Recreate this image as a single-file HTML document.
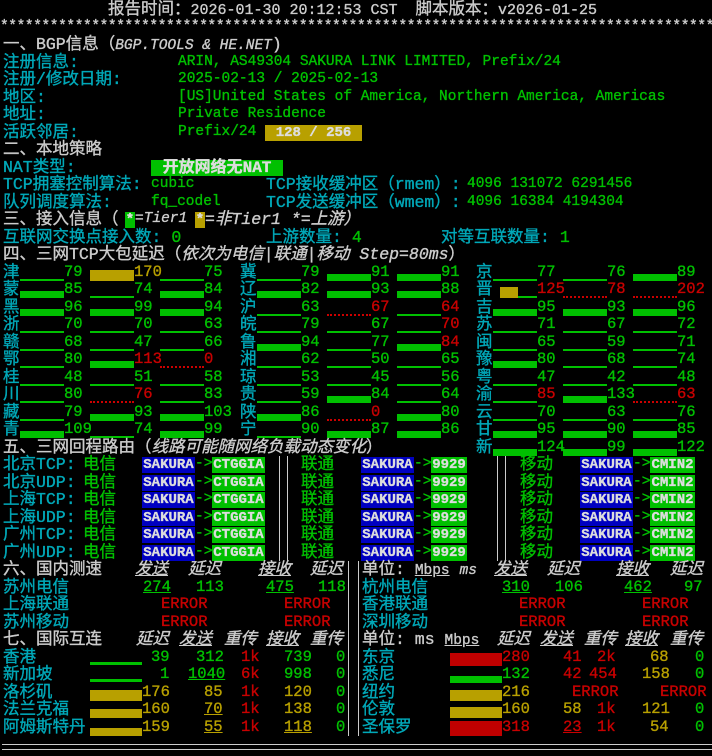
<!DOCTYPE html>
<html><head><meta charset="utf-8"><style>
body{margin:0;background:#000;width:712px;height:756px;position:relative;overflow:hidden;font-family:"Liberation Mono","Noto Sans CJK SC",monospace;font-size:14.5px;color:#ccc;-webkit-text-stroke:0.35px currentColor}
.r{position:absolute;left:0;width:712px;height:17.5px;line-height:17.5px}
.r>*{position:absolute;white-space:pre;top:0}
.z{font-size:16.5px}
.w{color:#cccccc}.c{color:#00a8b8}.g{color:#00c000}.rd{color:#c80000}.y{color:#b8a000}
.it{font-style:italic}
.n{font-size:15.5px}
i{position:absolute;display:block;height:2px;top:15px!important;width:44px;background:#00c000;-webkit-text-stroke:0}
i.f{top:10px!important;height:7px}
i.t{top:6px!important;height:11px}
i.d{background:none;border-bottom:2px dotted #c00;height:0}
i.Y{background:#b8a000}i.R{background:#c00000}
.bb,.bg,.bo{font-weight:bold;color:#ddd;top:1px!important;height:16px;line-height:16px;text-align:center;font-size:14px}
.bb{background:#0000c0}.bg{background:#00c000}.bo{background:#b8a000}
.u{text-decoration:underline}
.vl{position:absolute;width:1px;background:#ccc}
</style></head><body>
<div class="r" style="top:1px"><span class="w" style="left:108px;font-size:15px"><span class="z">报告时间：</span>2026-01-30 20:12:53 CST  <span class="z">脚本版本：</span>v2026-01-25</span></div>
<div class="r" style="top:18.5px"><span class="w" style="left:0;letter-spacing:-0.4px">**************************************************************************************</span></div>
<div class="r" style="top:36px"><span class="w z" style="left:3px">一、BGP信息（<span class="it" style="font-size:14.5px">BGP.TOOLS &amp; HE.NET</span>)</span></div>
<div class="r" style="top:53.5px"><span class="c z" style="left:3px">注册信息:</span><span class="g" style="left:178px">ARIN, AS49304 SAKURA LINK LIMITED, Prefix/24</span></div>
<div class="r" style="top:71px"><span class="c z" style="left:3px">注册/修改日期:</span><span class="g" style="left:178px">2025-02-13 / 2025-02-13</span></div>
<div class="r" style="top:88.5px"><span class="c z" style="left:3px">地区:</span><span class="g" style="left:178px">[US]United States of America, Northern America, Americas</span></div>
<div class="r" style="top:106px"><span class="c z" style="left:3px">地址:</span><span class="g" style="left:178px">Private Residence</span></div>
<div class="r" style="top:123.5px"><span class="c z" style="left:3px">活跃邻居:</span><span class="g" style="left:178px">Prefix/24</span><span class="bo" style="left:265px;width:97px">128 / 256</span></div>
<div class="r" style="top:141px"><span class="w z" style="left:3px">二、本地策略</span></div>
<div class="r" style="top:158.5px"><span class="c z" style="left:3px">NAT类型:</span><span class="bg z" style="left:151px;width:132px;font-size:16px">开放网络无NAT</span></div>
<div class="r" style="top:176px"><span class="c z" style="left:3px">TCP拥塞控制算法:</span><span class="g" style="left:151px">cubic</span><span class="c z" style="left:266px">TCP接收缓冲区（rmem）:</span><span class="g" style="left:467px">4096 131072 6291456</span></div>
<div class="r" style="top:193.5px"><span class="c z" style="left:3px">队列调度算法:</span><span class="g" style="left:151px">fq_codel</span><span class="c z" style="left:266px">TCP发送缓冲区（wmem）:</span><span class="g" style="left:467px">4096 16384 4194304</span></div>
<div class="r" style="top:211px"><span class="w z" style="left:3px">三、接入信息（</span><span class="bg" style="left:125px;width:10px">*</span><span class="w it" style="left:135px">=Tier1</span><span class="bo" style="left:195px;width:10px">*</span><span class="w it z" style="left:205px">=非Tier1 *=上游）</span></div>
<div class="r" style="top:228.5px"><span class="c z" style="left:3px">互联网交换点接入数: <span class="g">0</span></span><span class="c z" style="left:266px">上游数量: <span class="g">4</span></span><span class="c z" style="left:441px">对等互联数量: <span class="g">1</span></span></div>
<div class="r" style="top:246px"><span class="w z" style="left:3px">四、三网TCP大包延迟（<span class="it">依次为电信|联通|移动 Step=80ms</span>）</span></div>

<div class="r n" style="top:263.5px"><span class="c z" style="left:3px">津</span><i style="left:20px"></i><span class="g" style="left:64px">79</span><i class="t Y" style="left:90px"></i><span class="y" style="left:134px">170</span><i style="left:160px"></i><span class="g" style="left:204px">75</span>
<span class="c z" style="left:240px">冀</span><i style="left:257px"></i><span class="g" style="left:301px">79</span><i class="f" style="left:327px"></i><span class="g" style="left:371px">91</span><i class="f" style="left:397px"></i><span class="g" style="left:441px">91</span>
<span class="c z" style="left:476px">京</span><i style="left:493px"></i><span class="g" style="left:537px">77</span><i style="left:563px"></i><span class="g" style="left:607px">76</span><i class="f" style="left:633px"></i><span class="g" style="left:677px">89</span></div>

<div class="r n" style="top:281px"><span class="c z" style="left:3px">蒙</span><i class="f" style="left:20px"></i><span class="g" style="left:64px">85</span><i style="left:90px"></i><span class="g" style="left:134px">74</span><i class="f" style="left:160px"></i><span class="g" style="left:204px">84</span>
<span class="c z" style="left:240px">辽</span><i class="f" style="left:257px"></i><span class="g" style="left:301px">82</span><i class="f" style="left:327px"></i><span class="g" style="left:371px">93</span><i class="f" style="left:397px"></i><span class="g" style="left:441px">88</span>
<span class="c z" style="left:476px">晋</span><i class="t Y" style="left:500px;width:18px"></i><i style="left:518px;width:19px"></i><span class="rd" style="left:537px">125</span><i class="d" style="left:563px"></i><span class="rd" style="left:607px">78</span><i class="d" style="left:633px"></i><span class="rd" style="left:677px">202</span></div>

<div class="r n" style="top:298.5px"><span class="c z" style="left:3px">黑</span><i class="f" style="left:20px"></i><span class="g" style="left:64px">96</span><i class="f" style="left:90px"></i><span class="g" style="left:134px">99</span><i class="f" style="left:160px"></i><span class="g" style="left:204px">94</span>
<span class="c z" style="left:240px">沪</span><i style="left:257px"></i><span class="g" style="left:301px">63</span><i class="d" style="left:327px"></i><span class="rd" style="left:371px">67</span><i style="left:397px"></i><span class="rd" style="left:441px">64</span>
<span class="c z" style="left:476px">吉</span><i class="f" style="left:493px"></i><span class="g" style="left:537px">95</span><i class="f" style="left:563px"></i><span class="g" style="left:607px">93</span><i class="f" style="left:633px"></i><span class="g" style="left:677px">96</span></div>

<div class="r n" style="top:316px"><span class="c z" style="left:3px">浙</span><i style="left:20px"></i><span class="g" style="left:64px">70</span><i style="left:90px"></i><span class="g" style="left:134px">70</span><i style="left:160px"></i><span class="g" style="left:204px">63</span>
<span class="c z" style="left:240px">皖</span><i style="left:257px"></i><span class="g" style="left:301px">79</span><i style="left:327px"></i><span class="g" style="left:371px">67</span><i style="left:397px"></i><span class="rd" style="left:441px">70</span>
<span class="c z" style="left:476px">苏</span><i style="left:493px"></i><span class="g" style="left:537px">71</span><i style="left:563px"></i><span class="g" style="left:607px">67</span><i style="left:633px"></i><span class="g" style="left:677px">72</span></div>

<div class="r n" style="top:333.5px"><span class="c z" style="left:3px">赣</span><i style="left:20px"></i><span class="g" style="left:64px">68</span><i style="left:90px"></i><span class="g" style="left:134px">47</span><i style="left:160px"></i><span class="g" style="left:204px">66</span>
<span class="c z" style="left:240px">鲁</span><i class="f" style="left:257px"></i><span class="g" style="left:301px">94</span><i style="left:327px"></i><span class="g" style="left:371px">77</span><i class="f" style="left:397px"></i><span class="rd" style="left:441px">84</span>
<span class="c z" style="left:476px">闽</span><i style="left:493px"></i><span class="g" style="left:537px">65</span><i style="left:563px"></i><span class="g" style="left:607px">59</span><i style="left:633px"></i><span class="g" style="left:677px">71</span></div>

<div class="r n" style="top:351px"><span class="c z" style="left:3px">鄂</span><i style="left:20px"></i><span class="g" style="left:64px">80</span><i class="f" style="left:90px"></i><span class="rd" style="left:134px">113</span><i class="d" style="left:160px"></i><span class="rd" style="left:204px">0</span>
<span class="c z" style="left:240px">湘</span><i style="left:257px"></i><span class="g" style="left:301px">62</span><i style="left:327px"></i><span class="g" style="left:371px">50</span><i style="left:397px"></i><span class="g" style="left:441px">65</span>
<span class="c z" style="left:476px">豫</span><i class="f" style="left:493px"></i><span class="g" style="left:537px">80</span><i style="left:563px"></i><span class="g" style="left:607px">68</span><i style="left:633px"></i><span class="g" style="left:677px">74</span></div>

<div class="r n" style="top:368.5px"><span class="c z" style="left:3px">桂</span><i style="left:20px"></i><span class="g" style="left:64px">48</span><i style="left:90px"></i><span class="g" style="left:134px">51</span><i style="left:160px"></i><span class="g" style="left:204px">58</span>
<span class="c z" style="left:240px">琼</span><i style="left:257px"></i><span class="g" style="left:301px">53</span><i style="left:327px"></i><span class="g" style="left:371px">45</span><i style="left:397px"></i><span class="g" style="left:441px">56</span>
<span class="c z" style="left:476px">粤</span><i style="left:493px"></i><span class="g" style="left:537px">47</span><i style="left:563px"></i><span class="g" style="left:607px">42</span><i style="left:633px"></i><span class="g" style="left:677px">48</span></div>

<div class="r n" style="top:386px"><span class="c z" style="left:3px">川</span><i style="left:20px"></i><span class="g" style="left:64px">80</span><i class="d" style="left:90px"></i><span class="rd" style="left:134px">76</span><i style="left:160px"></i><span class="g" style="left:204px">83</span>
<span class="c z" style="left:240px">贵</span><i style="left:257px"></i><span class="g" style="left:301px">59</span><i class="f" style="left:327px"></i><span class="g" style="left:371px">84</span><i style="left:397px"></i><span class="g" style="left:441px">64</span>
<span class="c z" style="left:476px">渝</span><i style="left:493px"></i><span class="rd" style="left:537px">85</span><i class="f" style="left:563px"></i><span class="g" style="left:607px">133</span><i class="d" style="left:633px"></i><span class="rd" style="left:677px">63</span></div>

<div class="r n" style="top:403.5px"><span class="c z" style="left:3px">藏</span><i style="left:20px"></i><span class="g" style="left:64px">79</span><i class="f" style="left:90px"></i><span class="g" style="left:134px">93</span><i class="f" style="left:160px"></i><span class="g" style="left:204px">103</span>
<span class="c z" style="left:240px">陕</span><i class="f" style="left:257px"></i><span class="g" style="left:301px">86</span><i class="d" style="left:327px"></i><span class="rd" style="left:371px">0</span><i class="f" style="left:397px"></i><span class="g" style="left:441px">80</span>
<span class="c z" style="left:476px">云</span><i style="left:493px"></i><span class="g" style="left:537px">70</span><i style="left:563px"></i><span class="g" style="left:607px">63</span><i style="left:633px"></i><span class="g" style="left:677px">76</span></div>

<div class="r n" style="top:421px"><span class="c z" style="left:3px">青</span><i class="f" style="left:20px"></i><span class="g" style="left:64px">109</span><i style="left:90px"></i><span class="g" style="left:134px">74</span><i class="f" style="left:160px"></i><span class="g" style="left:204px">99</span>
<span class="c z" style="left:240px">宁</span><i style="left:257px"></i><span class="g" style="left:301px">90</span><i class="f" style="left:327px"></i><span class="g" style="left:371px">87</span><i class="f" style="left:397px"></i><span class="g" style="left:441px">86</span>
<span class="c z" style="left:476px">甘</span><i class="f" style="left:493px"></i><span class="g" style="left:537px">95</span><i class="f" style="left:563px"></i><span class="g" style="left:607px">90</span><i class="f" style="left:633px"></i><span class="g" style="left:677px">85</span></div>

<div class="r n" style="top:438.5px"><span class="w z" style="left:3px">五、三网回程路由（<span class="it">线路可能随网络负载动态变化</span>）</span>
<span class="c z" style="left:476px">新</span><i class="f" style="left:493px"></i><span class="g" style="left:537px">124</span><i class="f" style="left:563px"></i><span class="g" style="left:607px">99</span><i class="f" style="left:633px"></i><span class="g" style="left:677px">122</span></div>

<div class="vl" style="left:279px;top:456px;height:105px"></div><div class="vl" style="left:287px;top:456px;height:105px"></div>
<div class="vl" style="left:497px;top:456px;height:105px"></div><div class="vl" style="left:505px;top:456px;height:105px"></div>

<div class="r" style="top:456px"><span class="c z" style="left:3px">北京TCP:</span><span class="g z" style="left:83px">电信</span><span class="bb" style="left:142px;width:53px">SAKURA</span><span class="g" style="left:195px">-&gt;</span><span class="bg" style="left:212px;width:53px">CTGGIA</span><span class="g z" style="left:301px">联通</span><span class="bb" style="left:361px;width:53px">SAKURA</span><span class="g" style="left:414px">-&gt;</span><span class="bg" style="left:431px;width:36px">9929</span><span class="g z" style="left:520px">移动</span><span class="bb" style="left:580px;width:53px">SAKURA</span><span class="g" style="left:633px">-&gt;</span><span class="bg" style="left:650px;width:45px">CMIN2</span></div>
<div class="r" style="top:473.5px"><span class="c z" style="left:3px">北京UDP:</span><span class="g z" style="left:83px">电信</span><span class="bb" style="left:142px;width:53px">SAKURA</span><span class="g" style="left:195px">-&gt;</span><span class="bg" style="left:212px;width:53px">CTGGIA</span><span class="g z" style="left:301px">联通</span><span class="bb" style="left:361px;width:53px">SAKURA</span><span class="g" style="left:414px">-&gt;</span><span class="bg" style="left:431px;width:36px">9929</span><span class="g z" style="left:520px">移动</span><span class="bb" style="left:580px;width:53px">SAKURA</span><span class="g" style="left:633px">-&gt;</span><span class="bg" style="left:650px;width:45px">CMIN2</span></div>
<div class="r" style="top:491px"><span class="c z" style="left:3px">上海TCP:</span><span class="g z" style="left:83px">电信</span><span class="bb" style="left:142px;width:53px">SAKURA</span><span class="g" style="left:195px">-&gt;</span><span class="bg" style="left:212px;width:53px">CTGGIA</span><span class="g z" style="left:301px">联通</span><span class="bb" style="left:361px;width:53px">SAKURA</span><span class="g" style="left:414px">-&gt;</span><span class="bg" style="left:431px;width:36px">9929</span><span class="g z" style="left:520px">移动</span><span class="bb" style="left:580px;width:53px">SAKURA</span><span class="g" style="left:633px">-&gt;</span><span class="bg" style="left:650px;width:45px">CMIN2</span></div>
<div class="r" style="top:508.5px"><span class="c z" style="left:3px">上海UDP:</span><span class="g z" style="left:83px">电信</span><span class="bb" style="left:142px;width:53px">SAKURA</span><span class="g" style="left:195px">-&gt;</span><span class="bg" style="left:212px;width:53px">CTGGIA</span><span class="g z" style="left:301px">联通</span><span class="bb" style="left:361px;width:53px">SAKURA</span><span class="g" style="left:414px">-&gt;</span><span class="bg" style="left:431px;width:36px">9929</span><span class="g z" style="left:520px">移动</span><span class="bb" style="left:580px;width:53px">SAKURA</span><span class="g" style="left:633px">-&gt;</span><span class="bg" style="left:650px;width:45px">CMIN2</span></div>
<div class="r" style="top:526px"><span class="c z" style="left:3px">广州TCP:</span><span class="g z" style="left:83px">电信</span><span class="bb" style="left:142px;width:53px">SAKURA</span><span class="g" style="left:195px">-&gt;</span><span class="bg" style="left:212px;width:53px">CTGGIA</span><span class="g z" style="left:301px">联通</span><span class="bb" style="left:361px;width:53px">SAKURA</span><span class="g" style="left:414px">-&gt;</span><span class="bg" style="left:431px;width:36px">9929</span><span class="g z" style="left:520px">移动</span><span class="bb" style="left:580px;width:53px">SAKURA</span><span class="g" style="left:633px">-&gt;</span><span class="bg" style="left:650px;width:45px">CMIN2</span></div>
<div class="r" style="top:543.5px"><span class="c z" style="left:3px">广州UDP:</span><span class="g z" style="left:83px">电信</span><span class="bb" style="left:142px;width:53px">SAKURA</span><span class="g" style="left:195px">-&gt;</span><span class="bg" style="left:212px;width:53px">CTGGIA</span><span class="g z" style="left:301px">联通</span><span class="bb" style="left:361px;width:53px">SAKURA</span><span class="g" style="left:414px">-&gt;</span><span class="bg" style="left:431px;width:36px">9929</span><span class="g z" style="left:520px">移动</span><span class="bb" style="left:580px;width:53px">SAKURA</span><span class="g" style="left:633px">-&gt;</span><span class="bg" style="left:650px;width:45px">CMIN2</span></div>

<div class="vl" style="left:348px;top:561px;height:175px"></div><div class="vl" style="left:358px;top:561px;height:175px"></div>

<div class="r" style="top:561px"><span class="w z" style="left:3px">六、国内测速</span><span class="w z it u" style="left:135px">发送</span><span class="w z it" style="left:188px">延迟</span><span class="w z it u" style="left:258px">接收</span><span class="w z it" style="left:310px">延迟</span><span class="w z" style="left:362px">单位: <span class="u" style="font-size:14.5px">Mbps</span> <span class="it" style="font-size:14.5px">ms</span></span><span class="w z it u" style="left:494px">发送</span><span class="w z it" style="left:547px">延迟</span><span class="w z it u" style="left:616px">接收</span><span class="w z it" style="left:670px">延迟</span></div>
<div class="r n" style="top:578.5px"><span class="c z" style="left:3px">苏州电信</span><span class="g u" style="left:143px">274</span><span class="g" style="left:196px">113</span><span class="g u" style="left:266px">475</span><span class="g" style="left:318px">118</span><span class="c z" style="left:362px">杭州电信</span><span class="g u" style="left:502px">310</span><span class="g" style="left:555px">106</span><span class="g u" style="left:624px">462</span><span class="g" style="left:684px">97</span></div>
<div class="r n" style="top:596px"><span class="c z" style="left:3px">上海联通</span><span class="rd" style="left:161px">ERROR</span><span class="rd" style="left:284px">ERROR</span><span class="c z" style="left:362px">香港联通</span><span class="rd" style="left:519px">ERROR</span><span class="rd" style="left:642px">ERROR</span></div>
<div class="r n" style="top:613.5px"><span class="c z" style="left:3px">苏州移动</span><span class="rd" style="left:161px">ERROR</span><span class="rd" style="left:284px">ERROR</span><span class="c z" style="left:362px">深圳移动</span><span class="rd" style="left:519px">ERROR</span><span class="rd" style="left:642px">ERROR</span></div>
<div class="r" style="top:631px"><span class="w z" style="left:3px">七、国际互连</span><span class="w z it" style="left:136px">延迟</span><span class="w z it u" style="left:179px">发送</span><span class="w z it" style="left:224px">重传</span><span class="w z it u" style="left:266px">接收</span><span class="w z it" style="left:310px">重传</span><span class="w z" style="left:362px">单位: ms <span class="u" style="font-size:14.5px">Mbps</span></span><span class="w z it" style="left:497px">延迟</span><span class="w z it u" style="left:540px">发送</span><span class="w z it" style="left:584px">重传</span><span class="w z it u" style="left:625px">接收</span><span class="w z it" style="left:670px">重传</span></div>
<div class="r n" style="top:648.5px"><span class="c z" style="left:3px">香港</span><i style="left:90px;width:52px;top:13px!important;height:3px"></i><span class="g" style="left:151px">39</span><span class="g" style="left:196px">312</span><span class="rd" style="left:241px">1k</span><span class="g" style="left:284px">739</span><span class="g" style="left:336px">0</span>
<span class="c z" style="left:362px">东京</span><i class="t R" style="left:450px;width:52px;top:4px!important;height:13px"></i><span class="rd" style="left:502px">280</span><span class="rd" style="left:563px">41</span><span class="rd" style="left:597px">2k</span><span class="y" style="left:650px">68</span><span class="g" style="left:695px">0</span></div>
<div class="r n" style="top:666px"><span class="c z" style="left:3px">新加坡</span><i style="left:90px;width:52px;top:13px!important;height:3px"></i><span class="g" style="left:160px">1</span><span class="g u" style="left:188px">1040</span><span class="rd" style="left:241px">6k</span><span class="g" style="left:284px">998</span><span class="g" style="left:336px">0</span>
<span class="c z" style="left:362px">悉尼</span><i style="left:450px;width:52px;top:10px!important;height:7px"></i><span class="g" style="left:502px">132</span><span class="rd" style="left:563px">42</span><span class="rd" style="left:589px">454</span><span class="y" style="left:642px">158</span><span class="g" style="left:695px">0</span></div>
<div class="r n" style="top:683.5px"><span class="c z" style="left:3px">洛杉矶</span><i class="t Y" style="left:90px;width:52px"></i><span class="y" style="left:142px">176</span><span class="y" style="left:204px">85</span><span class="rd" style="left:241px">1k</span><span class="y" style="left:284px">120</span><span class="g" style="left:336px">0</span>
<span class="c z" style="left:362px">纽约</span><i class="t Y" style="left:450px;width:52px"></i><span class="y" style="left:502px">216</span><span class="rd" style="left:572px">ERROR</span><span class="rd" style="left:660px">ERROR</span></div>
<div class="r n" style="top:701px"><span class="c z" style="left:3px">法兰克福</span><i class="Y" style="left:90px;width:52px;top:8px!important;height:9px"></i><span class="y" style="left:142px">160</span><span class="y u" style="left:204px">70</span><span class="rd" style="left:241px">1k</span><span class="y" style="left:284px">138</span><span class="g" style="left:336px">0</span>
<span class="c z" style="left:362px">伦敦</span><i class="t Y" style="left:450px;width:52px"></i><span class="y" style="left:502px">160</span><span class="y" style="left:563px">58</span><span class="rd" style="left:597px">1k</span><span class="y" style="left:642px">121</span><span class="g" style="left:695px">0</span></div>
<div class="r n" style="top:718.5px"><span class="c z" style="left:3px">阿姆斯特丹</span><i class="Y" style="left:90px;width:52px;top:9px!important;height:8px"></i><span class="y" style="left:142px">159</span><span class="y u" style="left:204px">55</span><span class="rd" style="left:241px">1k</span><span class="y u" style="left:284px">118</span><span class="g" style="left:336px">0</span>
<span class="c z" style="left:362px">圣保罗</span><i class="t R" style="left:450px;width:52px;top:2px!important;height:15px"></i><span class="rd" style="left:502px">318</span><span class="rd u" style="left:563px">23</span><span class="rd" style="left:597px">1k</span><span class="y" style="left:650px">54</span><span class="g" style="left:695px">0</span></div>
<div style="position:absolute;left:2px;top:744px;width:710px;height:1px;background:#ccc"></div>
<div style="position:absolute;left:2px;top:749px;width:710px;height:1px;background:#ccc"></div>
</body></html>
